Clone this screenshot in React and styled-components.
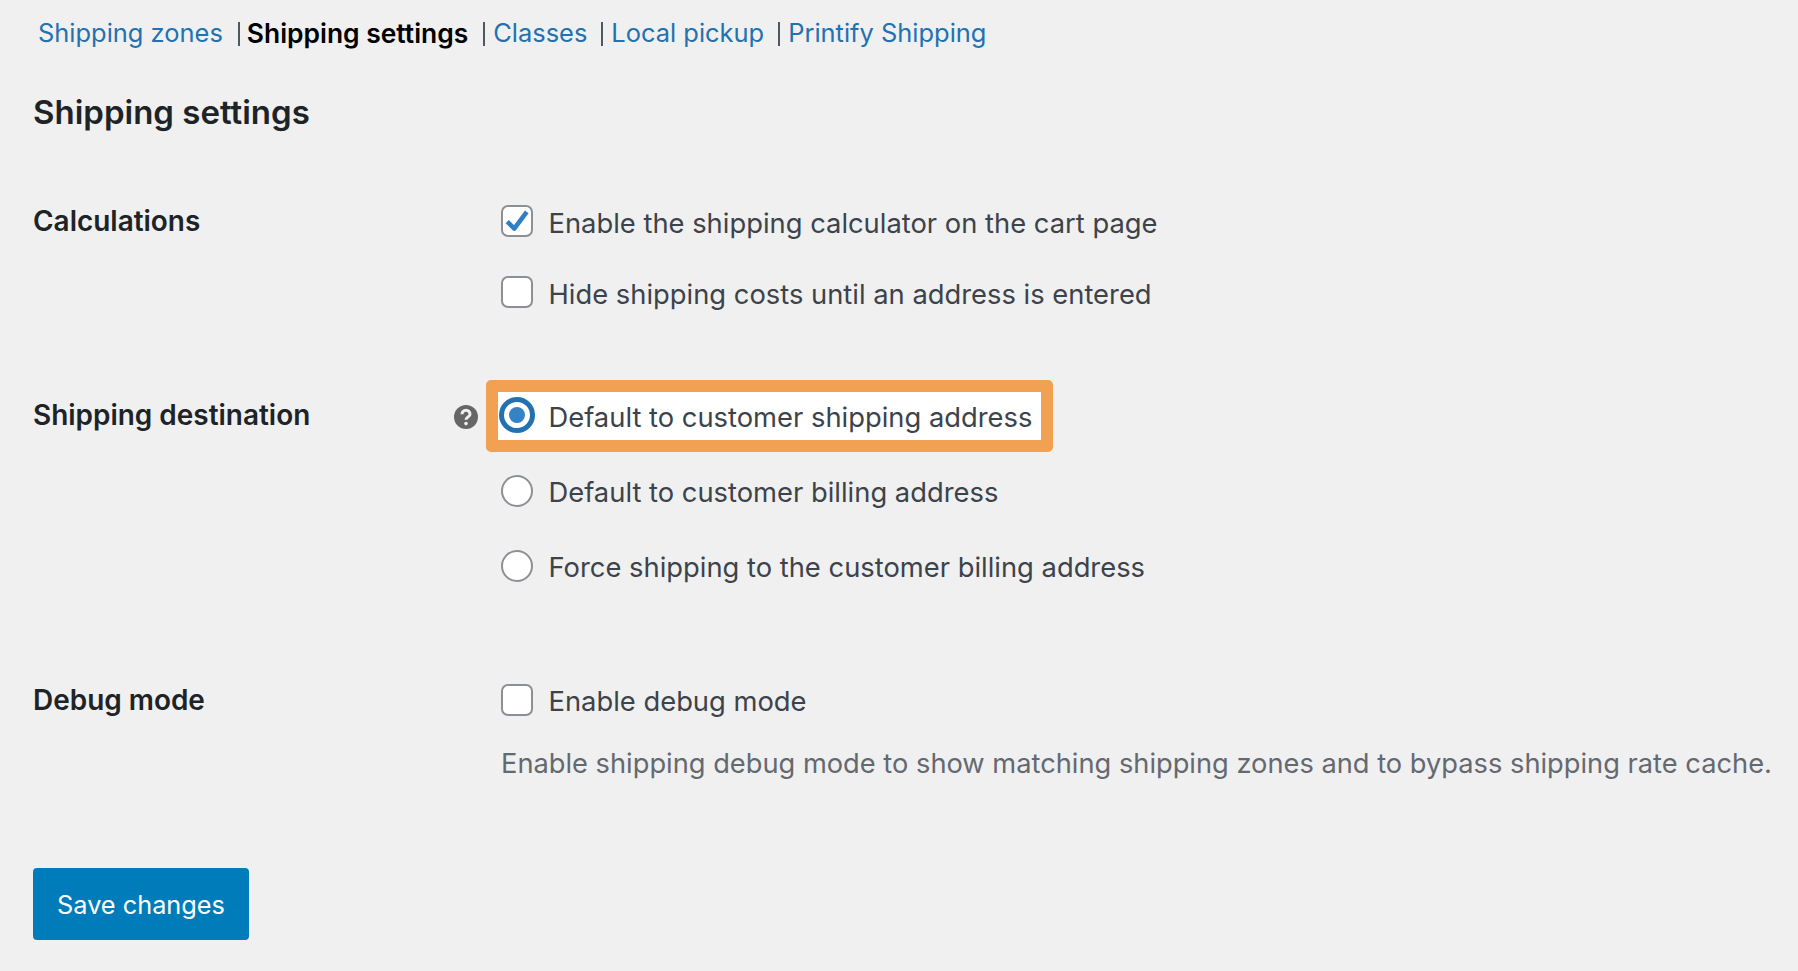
import React from "react";
import styled, { createGlobalStyle } from "styled-components";

const Global = createGlobalStyle`
  html, body { margin: 0; padding: 0; background: #f0f0f1; }
  body { font-family: Inter, "Liberation Sans", sans-serif; color: #3c434a; }
`;

const Page = styled.div`
  width: 1798px;
  height: 971px;
  box-sizing: border-box;
  padding: 0 0 0 33px;
  background: #f0f0f1;
  overflow: hidden;
`;

const Nav = styled.nav`
  display: flex;
  align-items: center;
  height: 38px;
  margin-top: 14px;
  padding-left: 5px;
  font-size: 25.45px;
  line-height: 38px;
`;

const NavLink = styled.a`
  color: #2271b1;
  text-decoration: none;
`;

const NavCurrent = styled.span`
  color: #000;
  font-size: 26.4px;
  font-weight: 600;
`;

const Sep = styled.span`
  width: 2px;
  height: 24px;
  background: #50575e;
  margin: 2px ${(p) => p.$right ?? 8}px 0 ${(p) => p.$left ?? 14}px;
`;

const Heading = styled.h2`
  margin: 38px 0 0;
  font-size: 33px;
  line-height: 44px;
  font-weight: 600;
  color: #1d2327;
`;

const Row = styled.div`
  display: grid;
  grid-template-columns: 468px 1fr;
  margin-top: ${(p) => p.$top}px;
`;

const LabelCell = styled.div`
  display: flex;
  justify-content: space-between;
  align-items: flex-start;
  padding-right: 23px;
`;

const Label = styled.div`
  padding-top: ${(p) => p.$top || 0}px;
  font-size: 27.95px;
  line-height: 36px;
  font-weight: 600;
  color: #1d2327;
`;

const Help = styled.svg`
  width: 24px;
  height: 24px;
  margin-top: 25px;
  flex: none;
`;

const Options = styled.div`
  display: flex;
  flex-direction: column;
`;

const Option = styled.label`
  display: flex;
  align-items: center;
  height: 36px;
  margin-top: ${(p) => p.$top || 0}px;
  color: #3c434a;
`;

const OptionText = styled.span`
  padding-top: ${(p) => p.$pad ?? 3}px;
  font-size: 27.35px;
  line-height: 36px;
  white-space: nowrap;
`;

const Box = styled.span`
  display: flex;
  align-items: center;
  justify-content: center;
  box-sizing: border-box;
  width: 32px;
  height: 32px;
  margin-right: 15.5px;
  background: #fff;
  border: 2px solid #8c8f94;
  border-radius: 7px;
  flex: none;
`;

const Radio = styled(Box)`
  border-radius: 50%;
`;

const HighlightOption = styled.label`
  display: flex;
  align-items: center;
  width: max-content;
  box-sizing: border-box;
  height: 72px;
  margin-left: -15px;
  padding: 0 8.5px 0 1px;
  border: 12px solid #f2a052;
  border-radius: 5px;
  background: #fff;
  color: #3c434a;
`;

const RadioOn = styled.span`
  display: flex;
  align-items: center;
  justify-content: center;
  box-sizing: border-box;
  width: 36px;
  height: 36px;
  margin: -3px 13.5px 0 0;
  background: #fff;
  border: 5px solid #2271b1;
  border-radius: 50%;
  flex: none;
`;

const Dot = styled.span`
  width: 16px;
  height: 16px;
  border-radius: 50%;
  background: #3582c4;
`;

const Desc = styled.div`
  margin-top: 28px;
  font-size: 27.25px;
  line-height: 36px;
  color: #646970;
  white-space: nowrap;
`;

const Save = styled.button`
  display: block;
  width: 216px;
  height: 72px;
  margin-top: 86px;
  padding: 0;
  border: 0;
  border-radius: 4px;
  background: #007cba;
  color: #fff;
  font-family: inherit;
  font-size: 25.3px;
`;

export default function App() {
  return (
    <Page>
      <Global />
      <Nav>
        <NavLink>Shipping zones</NavLink>
        <Sep $left={15} $right={7} />
        <NavCurrent>Shipping settings</NavCurrent>
        <Sep $left={15} />
        <NavLink>Classes</NavLink>
        <Sep />
        <NavLink>Local pickup</NavLink>
        <Sep />
        <NavLink>Printify Shipping</NavLink>
      </Nav>
      <Heading>Shipping settings</Heading>
      <Row $top={69}>
        <LabelCell><Label>Calculations</Label></LabelCell>
        <Options>
          <Option>
            <Box>
              <svg width="26" height="26" viewBox="0 0 24 24" fill="none">
                <path d="M3 12.5 L9.5 19 L21 3.5" stroke="#2f7fc4" strokeWidth="4.2" strokeLinejoin="round" />
              </svg>
            </Box>
            <OptionText $pad={5}>Enable the shipping calculator on the cart page</OptionText>
          </Option>
          <Option $top={35}><Box /><OptionText $pad={5}>Hide shipping costs until an address is entered</OptionText></Option>
        </Options>
      </Row>
      <Row $top={70}>
        <LabelCell>
          <Label $top={17}>Shipping destination</Label>
          <Help viewBox="0 0 24 24">
            <circle cx="12" cy="12" r="12" fill="#666" />
            <path d="M8 9.2a4 4 0 0 1 8 0c0 3-4 2.6-4 5.6" fill="none" stroke="#f0f0f1" strokeWidth="3" />
            <circle cx="12" cy="18.6" r="1.8" fill="#f0f0f1" />
          </Help>
        </LabelCell>
        <Options>
          <HighlightOption>
            <RadioOn><Dot /></RadioOn>
            <OptionText>Default to customer shipping address</OptionText>
          </HighlightOption>
          <Option $top={21}><Radio /><OptionText>Default to customer billing address</OptionText></Option>
          <Option $top={39}><Radio /><OptionText>Force shipping to the customer billing address</OptionText></Option>
        </Options>
      </Row>
      <Row $top={98}>
        <LabelCell><Label>Debug mode</Label></LabelCell>
        <Options>
          <Option><Box /><OptionText $pad={3}>Enable debug mode</OptionText></Option>
          <Desc>Enable shipping debug mode to show matching shipping zones and to bypass shipping rate cache.</Desc>
        </Options>
      </Row>
      <Save>Save changes</Save>
    </Page>
  );
}
